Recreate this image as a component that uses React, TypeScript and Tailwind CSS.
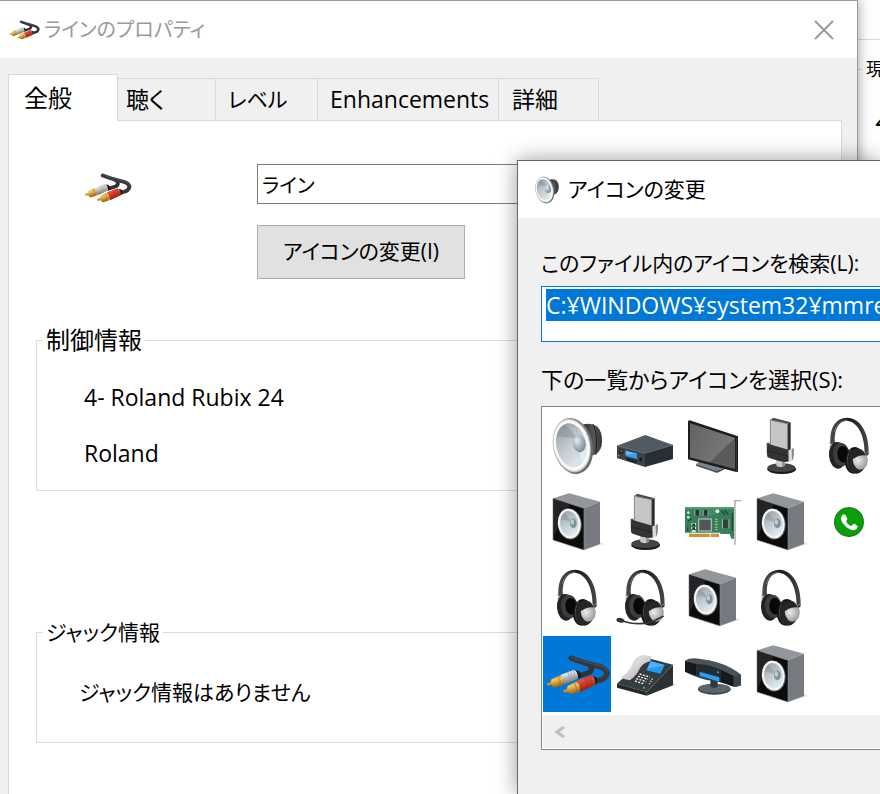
import React, { useState } from "react";

type IconProps = { className?: string; viewBox?: string };

const CELL = "0 0 204 228";

const Cables = ({ className, viewBox = CELL }: IconProps) => (
  <svg className={className} viewBox={viewBox} aria-hidden="true">
    <defs>
      <linearGradient id="cab-silver" x1="0" y1="0" x2="0.3" y2="1">
        <stop offset="0" stopColor="#b4b4b8" />
        <stop offset="0.35" stopColor="#e4e4e4" />
        <stop offset="1" stopColor="#6c6c72" />
      </linearGradient>
      <linearGradient id="cab-red" x1="0" y1="0" x2="0.3" y2="1">
        <stop offset="0" stopColor="#cf3a25" />
        <stop offset="0.35" stopColor="#e2533b" />
        <stop offset="1" stopColor="#a31204" />
      </linearGradient>
      <linearGradient id="cab-gold" x1="0" y1="0" x2="0.3" y2="1">
        <stop offset="0" stopColor="#c98a1c" />
        <stop offset="0.4" stopColor="#f0c660" />
        <stop offset="1" stopColor="#9a5f0c" />
      </linearGradient>
    </defs>
    <g fill="none" strokeLinecap="round">
      <path d="M130 82C152 92 148 108 132 112L108 119" stroke="#303133" strokeWidth="15" />
      <path d="M84 66C104 74 130 82 158 89C190 95 200 112 184 126C176 133 168 132 160 135" stroke="#37383b" strokeWidth="16" />
      <path d="M86 63C110 73 136 80 160 86C180 90 190 98 192 106" stroke="#4e4f53" strokeWidth="4" />
    </g>
    <path d="M96 103L108 105L117 122L105 128Z" fill="#1c1c1e" />
    <path d="M52 117L90 102Q98 100 103 113Q107 124 103 128L64 146Z" fill="url(#cab-silver)" />
    <path d="M74 108L84 135M82 105L92 132M90 102L99 129" stroke="#8f8f95" strokeWidth="2" />
    <path d="M11 142L28 136L31 144L14 149Z" fill="#c88f27" />
    <path d="M25 130L48 119Q57 119 61 131Q64 143 59 147L37 155Q29 156 25 146Q22 136 25 130Z" fill="url(#cab-gold)" />
    <path d="M45 121Q53 133 52 149" stroke="#9c6614" strokeWidth="2" fill="none" />
    <path d="M148 121L160 123Q166 132 162 143L152 147Z" fill="#1c1c1e" />
    <path d="M101 134L142 119Q151 118 155 130Q159 142 155 148L113 167Z" fill="url(#cab-red)" />
    <path d="M126 125L135 155M134 122L143 152M142 120L150 149" stroke="#9e2617" strokeWidth="2" />
    <path d="M60 163L76 157L80 166L64 170Z" fill="#c88f27" />
    <path d="M74 149L98 137Q106 138 110 150Q112 162 107 168L86 175Q78 174 74 165Q71 155 74 149Z" fill="url(#cab-gold)" />
    <path d="M94 140Q102 152 101 169" stroke="#9c6614" strokeWidth="2" fill="none" />
  </svg>
);

const Speaker = ({ className, viewBox = CELL }: IconProps) => (
  <svg className={className} viewBox={viewBox} aria-hidden="true">
    <defs>
      <linearGradient id="spk-rim" x1="0" y1="0" x2="1" y2="1">
        <stop offset="0" stopColor="#a9a9ab" />
        <stop offset="1" stopColor="#5b5c5e" />
      </linearGradient>
      <linearGradient id="spk-cone" x1="0" y1="0" x2="0.4" y2="1">
        <stop offset="0" stopColor="#8d9499" />
        <stop offset="0.45" stopColor="#b9c2c7" />
        <stop offset="1" stopColor="#dbe6ec" />
      </linearGradient>
      <radialGradient id="spk-dome" cx="0.35" cy="0.3" r="0.8">
        <stop offset="0" stopColor="#e1eaf0" />
        <stop offset="1" stopColor="#6d7f8c" />
      </radialGradient>
      <linearGradient id="spk-back" x1="0" y1="0" x2="1" y2="0">
        <stop offset="0" stopColor="#2c2d2f" />
        <stop offset="0.6" stopColor="#55575a" />
        <stop offset="1" stopColor="#333436" />
      </linearGradient>
    </defs>
    <path d="M118 50Q142 42 162 55Q178 70 177 102Q176 126 160 138L134 148Z" fill="url(#spk-back)" />
    <path d="M150 48Q166 76 158 140" stroke="#1f2022" strokeWidth="3" fill="none" />
    <ellipse cx="90" cy="114" rx="59" ry="85" transform="rotate(-12 90 114)" fill="url(#spk-rim)" />
    <ellipse cx="86" cy="113" rx="56" ry="81" transform="rotate(-12 86 113)" fill="#c4c4c6" />
    <ellipse cx="86" cy="112" rx="53" ry="77" transform="rotate(-12 86 112)" fill="#fafafa" />
    <ellipse cx="85" cy="112" rx="45" ry="67" transform="rotate(-12 85 112)" fill="url(#spk-cone)" />
    <path d="M42 84L106 94L68 50Q48 54 42 84Z" fill="#7f878c" opacity="0.4" />
    <path d="M108 124L118 166Q128 150 128 124Z" fill="#f2f7fa" opacity="0.5" />
    <ellipse cx="109" cy="107" rx="19" ry="26" transform="rotate(-8 109 107)" fill="url(#spk-dome)" />
  </svg>
);

const Receiver = ({ className }: IconProps) => (
  <svg className={className} viewBox={CELL} aria-hidden="true">
    <path d="M18 113L103 81L186 111L102 136Z" fill="#505a61" />
    <path d="M18 113L102 136V177L18 150Z" fill="#394349" />
    <path d="M102 136L186 111V153L102 177Z" fill="#272f34" />
    <path d="M18 113L102 136L186 111" stroke="#5c676e" strokeWidth="2" fill="none" />
    <path d="M44 128L78 137V153L44 144Z" fill="#2d9df5" />
    <path d="M44 128L78 137L44 140Z" fill="#67bcff" />
    <path d="M44 150L80 160M48 156L76 164" stroke="#131719" strokeWidth="3" />
    <circle cx="31" cy="131" r="7" fill="#22292d" />
    <circle cx="31" cy="129" r="3" fill="#d9413b" />
    <ellipse cx="89" cy="154" rx="6" ry="8" fill="#171c1f" stroke="#4d585f" strokeWidth="2" />
    <circle cx="23" cy="143" r="2" fill="#a6afb4" />
  </svg>
);

const Monitor = ({ className }: IconProps) => (
  <svg className={className} viewBox={CELL} aria-hidden="true">
    <defs>
      <linearGradient id="mon-screen" x1="0" y1="0" x2="1" y2="1">
        <stop offset="0" stopColor="#505051" />
        <stop offset="1" stopColor="#5e5e60" />
      </linearGradient>
      <linearGradient id="mon-glare" x1="0" y1="0" x2="1" y2="0.3">
        <stop offset="0" stopColor="#6b6b6c" />
        <stop offset="1" stopColor="#868688" />
      </linearGradient>
    </defs>
    <path d="M51 169L68 158L143 181L116 194Q108 194 104 191L52 174Z" fill="#48545b" />
    <path d="M51 169L68 160L143 181L112 189Z" fill="#76858e" />
    <path d="M27 39L32 37L177 85V191L172 192L27 154Z" fill="#1c1d1f" />
    <path d="M33 46L168 90V183L33 148Z" fill="url(#mon-screen)" />
    <path d="M33 46L168 90L92 163L33 148Z" fill="url(#mon-glare)" opacity="0.7" />
    <path d="M172 87V192" stroke="#3f4144" strokeWidth="2" fill="none" />
  </svg>
);

const Microphone = ({ className }: IconProps) => (
  <svg className={className} viewBox={CELL} aria-hidden="true">
    <defs>
      <pattern id="mic-mesh" width="6" height="6" patternUnits="userSpaceOnUse">
        <rect width="6" height="6" fill="#b9b9ba" />
        <path d="M0 0L6 6M6 0L0 6" stroke="#cbcbcb" strokeWidth="2" />
      </pattern>
    </defs>
    <ellipse cx="104" cy="184" rx="43" ry="14" fill="#191a1b" />
    <ellipse cx="103" cy="179" rx="42" ry="13" fill="#414345" />
    <path d="M88 152H113V174Q101 181 88 174Z" fill="#c9cacc" />
    <path d="M105 152H113V174L105 177Z" fill="#929395" />
    <path d="M70 36L79 29L131 43L122 47Z" fill="#4c4d4f" />
    <path d="M122 47L131 43V128H122Z" fill="#2b2c2e" />
    <path d="M70 36L122 47V128L70 116Z" fill="url(#mic-mesh)" stroke="#5d5e60" strokeWidth="2" />
    <path d="M58 106L68 102V142L60 140Z" fill="#9b9c9e" />
    <path d="M122 128L140 120Q143 148 135 158L121 164Z" fill="#dddddf" />
    <path d="M134 124L140 120Q143 148 135 158Z" fill="#87888a" />
    <path d="M61 104L72 110L124 125L125 160Q110 167 62 148Q58 142 61 104Z" fill="#323335" />
    <path d="M60 128L124 145" stroke="#1b1c1d" strokeWidth="2" />
  </svg>
);

const Headphones = ({ className, boom = false }: IconProps & { boom?: boolean }) => (
  <svg className={className} viewBox={CELL} aria-hidden="true">
    <defs>
      <radialGradient id="hp-disc" cx="0.35" cy="0.35" r="0.8">
        <stop offset="0" stopColor="#ededed" />
        <stop offset="1" stopColor="#88898c" />
      </radialGradient>
      <linearGradient id="hp-band" x1="0" y1="0" x2="1" y2="0">
        <stop offset="0" stopColor="#4b4c4e" />
        <stop offset="0.5" stopColor="#1a1b1c" />
        <stop offset="1" stopColor="#45464a" />
      </linearGradient>
    </defs>
    <path d="M44 102Q44 92 58 96L62 122L44 132Z" fill="#b4b5b7" />
    <path
      d="M47 108C42 64 60 29 97 29C138 31 163 76 161 138L149 136C149 84 130 42 96 38C70 38 56 68 60 106Z"
      fill="url(#hp-band)"
    />
    <path d="M58 72C64 48 78 38 96 38" fill="none" stroke="#8c8d90" strokeWidth="2" />
    <path d="M143 139L158 131L162 137L149 152Z" fill="#8e8f92" />
    <circle cx="156" cy="138" r="4" fill="#3a3b3d" />
    <ellipse cx="68" cy="142" rx="26" ry="40" transform="rotate(-4 68 142)" fill="#222325" />
    <ellipse cx="79" cy="139" rx="25" ry="35" transform="rotate(-6 79 139)" fill="#3d3e40" />
    <ellipse cx="84" cy="139" rx="17" ry="25" transform="rotate(-6 84 139)" fill="#080808" />
    <ellipse cx="117" cy="157" rx="27" ry="40" transform="rotate(6 117 157)" fill="#131415" />
    <path d="M109 124C92 142 94 178 110 191" fill="none" stroke="#66676a" strokeWidth="2" />
    <ellipse cx="126" cy="159" rx="28" ry="38" transform="rotate(6 126 159)" fill="#242527" />
    <path d="M113 154L124 147Q134 141 150 142L157 148Q161 164 152 177Q142 188 129 184Q115 176 113 154Z" fill="url(#hp-disc)" />
    {boom && (
      <>
        <path d="M34 182C62 193 112 196 140 177L158 168" fill="none" stroke="#333436" strokeWidth="5" />
        <ellipse cx="28" cy="181" rx="12" ry="7" transform="rotate(12 28 181)" fill="#343538" />
      </>
    )}
  </svg>
);

const BoxSpeaker = ({ className }: IconProps) => (
  <svg className={className} viewBox={CELL} aria-hidden="true">
    <defs>
      <linearGradient id="box-cone" x1="0" y1="0" x2="0.3" y2="1">
        <stop offset="0" stopColor="#99a1a6" />
        <stop offset="1" stopColor="#dce8ee" />
      </linearGradient>
    </defs>
    <path d="M123 198L184 179L171 174Z" fill="#000" opacity="0.1" />
    <path d="M30 43L79 28L171 53L123 73Z" fill="#93969b" />
    <path d="M123 73L171 53V180L123 198Z" fill="#777a81" />
    <path d="M30 43L123 73V198L30 168Z" fill="#0c0c0d" stroke="#85888c" strokeWidth="2" />
    <path d="M32 46L80 61L32 156Z" fill="#353638" opacity="0.6" />
    <ellipse cx="80" cy="120" rx="36" ry="47" transform="rotate(-8 80 120)" fill="#5b5d60" />
    <ellipse cx="79" cy="119" rx="34" ry="45" transform="rotate(-8 79 119)" fill="#f5f5f5" />
    <ellipse cx="79" cy="119" rx="28" ry="38" transform="rotate(-8 79 119)" fill="url(#box-cone)" />
    <path d="M54 106L88 114L66 88Q56 92 54 106Z" fill="#7e878d" opacity="0.4" />
    <ellipse cx="91" cy="118" rx="10" ry="15" fill="#80929e" />
    <ellipse cx="88" cy="114" rx="5" ry="8" fill="#c3d0d8" />
  </svg>
);

const SoundCard = ({ className }: IconProps) => (
  <svg className={className} viewBox={CELL} aria-hidden="true">
    <path d="M168 183V50H186" fill="none" stroke="#a4a6a8" strokeWidth="4" />
    <path d="M18 70H165V164H157L152 150H124V146H18Z" fill="#35805b" />
    <path d="M18 70H165V76H18Z" fill="#4f9b74" />
    <path d="M30 149H48V159H30ZM48 149H92V159H48ZM95 149H120V159H95Z" fill="#d08a30" />
    <path d="M36 149V159M42 149V159M60 149V159M66 149V159M72 149V159M78 149V159M84 149V159M101 149V159M107 149V159M113 149V159" stroke="#e0a24c" strokeWidth="2" />
    <path d="M46 78H64V95H46ZM71 78H89V95H71Z" fill="#a3b8ac" />
    <path d="M49 78H61V95H49ZM74 78H86V95H74Z" fill="#2d3331" />
    <rect x="57" y="103" width="42" height="40" fill="#a3b8ac" />
    <rect x="61" y="107" width="34" height="32" fill="#505756" />
    <rect x="129" y="106" width="22" height="27" fill="#a3b8ac" />
    <rect x="132" y="106" width="16" height="27" fill="#363c3a" />
    <circle cx="115" cy="82" r="6" fill="#dde5e0" />
    <circle cx="28" cy="86" r="4" fill="#dde5e0" />
    <circle cx="28" cy="100" r="4" fill="#dde5e0" />
    <path d="M37 121H51M37 132H51M38 142H50" stroke="#e6ece8" strokeWidth="6" />
    <path d="M40 122H48M40 133H48" stroke="#1e2422" strokeWidth="6" />
    <path d="M112 104V140" stroke="#d9c77d" strokeWidth="7" strokeDasharray="3 5" />
    <path d="M126 80L138 92M136 78L148 92M28 112L36 104M160 88V140M26 130V140" stroke="#1d4a35" strokeWidth="4" />
    <path d="M96 78V96M104 76V94" stroke="#6da888" strokeWidth="2" />
  </svg>
);

const Call = ({ className }: IconProps) => (
  <svg className={className} viewBox={CELL} aria-hidden="true">
    <circle cx="102" cy="114" r="43" fill="#0aa00a" stroke="#1b7d1b" strokeWidth="4" />
    <path
      d="M79 98Q82 92 86 91Q90 90 93 96L97 104Q98 108 93 111Q96 120 108 127Q114 119 118 119L127 125Q130 128 125 134Q119 141 108 137Q94 132 83 117Q76 106 79 98Z"
      fill="#fff"
    />
  </svg>
);

const DeskPhone = ({ className }: IconProps) => (
  <svg className={className} viewBox={CELL} aria-hidden="true">
    <defs>
      <linearGradient id="dp-handset" x1="0" y1="0" x2="1" y2="1">
        <stop offset="0" stopColor="#a5a6a8" />
        <stop offset="0.4" stopColor="#dcdcdd" />
        <stop offset="1" stopColor="#a2a3a6" />
      </linearGradient>
    </defs>
    <path d="M186 140L194 146L140 166Z" fill="#000" opacity="0.15" />
    <path d="M18 143L34 128L118 68L186 86L107 168Z" fill="#363d41" />
    <path d="M18 143L107 168V179L18 155Z" fill="#22272a" />
    <path d="M107 168L186 86V148L107 179Z" fill="#2b3134" />
    <path d="M107 168L186 86" stroke="#596167" strokeWidth="2" />
    <path d="M119 76L161 87L148 113L106 103Z" fill="#269bf4" />
    <path d="M119 76L161 87L109 98Z" fill="#4fb0fd" />
    <path d="M28 124Q50 114 62 88Q74 58 100 57L121 61L118 76Q96 80 86 98Q76 120 56 133Q40 132 28 124Z" fill="url(#dp-handset)" />
    <path d="M86 114L116 123M81 121L111 130M76 128L106 137M72 135L100 144" stroke="#f5f5f5" strokeWidth="4" strokeDasharray="6 4" />
    <path d="M124 128L114 146" stroke="#dfe1e2" strokeWidth="5" strokeDasharray="3 5" />
    <circle cx="99" cy="155" r="3" fill="#31d847" />
  </svg>
);

const Dock = ({ className }: IconProps) => (
  <svg className={className} viewBox={CELL} aria-hidden="true">
    <ellipse cx="106" cy="160" rx="49" ry="16" fill="#343d42" />
    <ellipse cx="106" cy="157" rx="48" ry="14" fill="#5a656c" />
    <path d="M94 128H116V152Q105 158 94 152Z" fill="#30383c" />
    <path d="M18 74Q32 64 60 68Q124 76 156 96Q178 108 186 116V148L170 153Q124 136 82 132Q44 122 18 107Z" fill="#49545a" />
    <path d="M18 76L52 84V119L18 107Z" fill="#151718" />
    <path d="M52 84Q96 86 126 101V139Q90 132 52 119Z" fill="#252c30" />
    <path d="M126 101L164 120V152Q146 146 126 139Z" fill="#151718" />
    <path d="M164 120L186 116V148L170 153L164 152Z" fill="#3a4449" />
    <path d="M62 107L121 124V137L62 120Z" fill="#2a9df5" />
    <circle cx="117" cy="109" r="3" fill="#33b8e6" />
    <path d="M22 82V106M28 84V108M34 86V110M40 88V112M132 110V136M138 114V139M144 117V142M150 120V145" stroke="#2b3033" strokeWidth="2" strokeDasharray="2 3" />
  </svg>
);

const tabs = [
  { id: "general", label: "全般", className: "w-[97px] text-2xl" },
  { id: "listen", label: "聴く", className: "w-[98px] pl-2 text-[23px]" },
  { id: "level", label: "レベル", className: "w-[102px] pl-3 text-[21px]" },
  { id: "enhancements", label: "Enhancements", className: "w-[181px] pl-3 text-[23px]" },
  { id: "detail", label: "詳細", className: "w-[100px] pl-[13px] text-[23px]" },
];

const icons = [
  { name: "speaker", col: 1, Icon: Speaker },
  { name: "receiver", col: 2, Icon: Receiver },
  { name: "monitor", col: 3, Icon: Monitor },
  { name: "microphone", col: 4, Icon: Microphone },
  { name: "headphones", col: 5, Icon: Headphones },
  { name: "box speaker", col: 1, Icon: BoxSpeaker },
  { name: "stand microphone", col: 2, Icon: Microphone },
  { name: "sound card", col: 3, Icon: SoundCard },
  { name: "left speaker", col: 4, Icon: BoxSpeaker },
  { name: "call", col: 5, Icon: Call },
  { name: "stereo headphones", col: 1, Icon: Headphones },
  { name: "headset", col: 2, Icon: (p: IconProps) => <Headphones {...p} boom /> },
  { name: "right speaker", col: 3, Icon: BoxSpeaker },
  { name: "studio headphones", col: 4, Icon: Headphones },
  { name: "line", col: 1, Icon: Cables },
  { name: "desk phone", col: 2, Icon: DeskPhone },
  { name: "dock", col: 3, Icon: Dock },
  { name: "subwoofer", col: 4, Icon: BoxSpeaker },
];

const cols: Record<number, string> = {
  1: "col-start-1",
  2: "col-start-2",
  3: "col-start-3",
  4: "col-start-4",
  5: "col-start-5",
};

const PropertiesDialog = () => {
  const [tab, setTab] = useState("general");
  const [name, setName] = useState("ライン");

  return (
    <section
      aria-label="ラインのプロパティ"
      className="z-10 flex min-w-0 flex-1 flex-col border-t border-r border-[#9a9a9a] bg-[#f0f0f0] shadow-[0_0_12px_rgba(0,0,0,0.4)]"
    >
      <header className="flex h-[57px] items-center bg-white pr-[23px] pl-[9px]">
        <Cables className="h-5 w-[31px]" viewBox="8 56 194 122" />
        <h1 className="ml-1 flex-1 text-xl text-[#999999]">ラインのプロパティ</h1>
        <button type="button" aria-label="閉じる" className="text-[#999999]">
          <svg className="h-5 w-5" viewBox="0 0 20 20" fill="none" stroke="currentColor" strokeWidth="2">
            <path d="M1 1L19 19M19 1L1 19" />
          </svg>
        </button>
      </header>

      <div className="flex flex-1 flex-col pt-4 pr-[15px] pl-2">
        <div role="tablist" className="flex items-end">
          {tabs.map((t) => (
            <button
              key={t.id}
              type="button"
              role="tab"
              aria-selected={tab === t.id}
              onClick={() => setTab(t.id)}
              className={`-mb-px shrink-0 border-t border-r border-[#d9d9d9] text-left ${t.className} ${
                tab === t.id
                  ? "z-10 h-[47px] min-w-[110px] border-l bg-white !pl-[15px]"
                  : "h-[43px] border-b"
              }`}
            >
              {t.label}
            </button>
          ))}
        </div>

        <div role="tabpanel" className="flex-1 border-x border-t border-[#d9d9d9] bg-white pt-[43px] pl-[27px]">
          <div className="flex items-start">
            <div className="w-[221px] shrink-0 pt-[9px] pl-12">
              <Cables className="h-[30px] w-12" viewBox="8 56 194 122" />
            </div>
            <div className="flex-1 pr-7">
              <input
                aria-label="名前"
                value={name}
                onChange={(e) => setName(e.target.value)}
                className="block h-10 w-full border border-[#7a7a7a] px-1 text-xl outline-none"
              />
              <button type="button" className="mt-[21px] block h-[54px] w-52 border border-[#adadad] bg-[#e1e1e1] text-[21px]">
                アイコンの変更(I)
              </button>
            </div>
          </div>

          <fieldset className="mt-[45px] mr-7 border border-[#dcdcdc] pb-5">
            <legend className="ml-[6px] px-[3px] text-2xl leading-8">制御情報</legend>
            <div className="flex flex-col gap-6 pt-[25px] pb-px pl-[47px] text-[23px] leading-8">
              <p>4- Roland Rubix 24</p>
              <p>Roland</p>
            </div>
          </fieldset>

          <fieldset className="mt-[125px] mr-7 border border-[#dcdcdc] pb-[34px]">
            <legend className="ml-[6px] px-[3px] text-[21px] leading-8">ジャック情報</legend>
            <p className="pt-7 pl-[42px] text-[21px] leading-8">ジャック情報はありません</p>
          </fieldset>
        </div>
      </div>
    </section>
  );
};

const ChangeIconDialog = () => {
  const [selected, setSelected] = useState("line");
  const [path, setPath] = useState("C:¥WINDOWS¥system32¥mmres.dll");

  return (
    <section
      aria-label="アイコンの変更"
      className="absolute top-40 right-0 bottom-0 left-[517px] z-20 border-t border-l border-[#666666] bg-[#f0f0f0] shadow-[0_0_20px_rgba(0,0,0,0.4)]"
    >
      <header className="flex h-[57px] items-center bg-white pl-4">
        <Speaker className="h-7 w-[26px]" viewBox="26 26 154 176" />
        <h2 className="ml-2 text-[21px]">アイコンの変更</h2>
      </header>

      <div className="pl-[23px]">
        <label htmlFor="icon-path" className="block pt-[29px] text-[21px] leading-8">
          このファイル内のアイコンを検索(L):
        </label>
        <div className="mt-[7px] h-14 border border-r-0 border-[#0078d7] bg-white pt-[2px] pl-1">
          <input
            id="icon-path"
            value={path}
            onChange={(e) => setPath(e.target.value)}
            className="block h-8 w-full bg-[#0078d7] text-[23px] text-white outline-none"
          />
        </div>

        <p id="icon-list-label" className="mt-[21px] text-[22px] leading-8">
          下の一覧からアイコンを選択(S):
        </p>
        <div className="mt-[11px] overflow-hidden border border-r-0 border-[#828790] bg-white p-px pr-0">
          <div role="listbox" aria-labelledby="icon-list-label" className="grid grid-cols-[repeat(5,68px)]">
            {icons.map(({ name, col, Icon }) => (
              <button
                key={name}
                type="button"
                role="option"
                aria-label={name}
                aria-selected={selected === name}
                onClick={() => setSelected(name)}
                className={`h-[76px] w-[68px] ${cols[col]} ${selected === name ? "bg-[#0078d7]" : ""}`}
              >
                <Icon className="h-[76px] w-[68px]" />
              </button>
            ))}
          </div>
          <div className="mt-[3px] flex h-[33px] items-center bg-[#f0f0f0] pl-3">
            <button type="button" aria-label="左へスクロール" className="text-[#bfbfbf]">
              <svg className="h-3 w-[10px]" viewBox="0 0 10 12" fill="none" stroke="currentColor" strokeWidth="3">
                <path d="M9 1L2 6L9 11" />
              </svg>
            </button>
          </div>
        </div>
      </div>
    </section>
  );
};

// sliver of the sound settings window that stays visible on the right
const BackgroundWindow = () => (
  <aside className="w-[22px] shrink-0 overflow-hidden bg-white whitespace-nowrap">
    <div className="h-10 border-b border-[#d9d9d9]" />
    <div className="flex h-[58px] items-center">
      <span className="w-1 shrink-0 border-t border-[#d9d9d9]" />
      <span className="ml-1 shrink-0 text-lg">現</span>
    </div>
    <p className="pt-[10px] pl-[18px] text-lg font-bold italic">4</p>
  </aside>
);

export default function App() {
  return (
    <main className="relative flex min-h-screen overflow-hidden bg-white font-['Open_Sans','Noto_Sans_CJK_JP',sans-serif] text-black [font-feature-settings:'palt']">
      <PropertiesDialog />
      <BackgroundWindow />
      <ChangeIconDialog />
    </main>
  );
}
